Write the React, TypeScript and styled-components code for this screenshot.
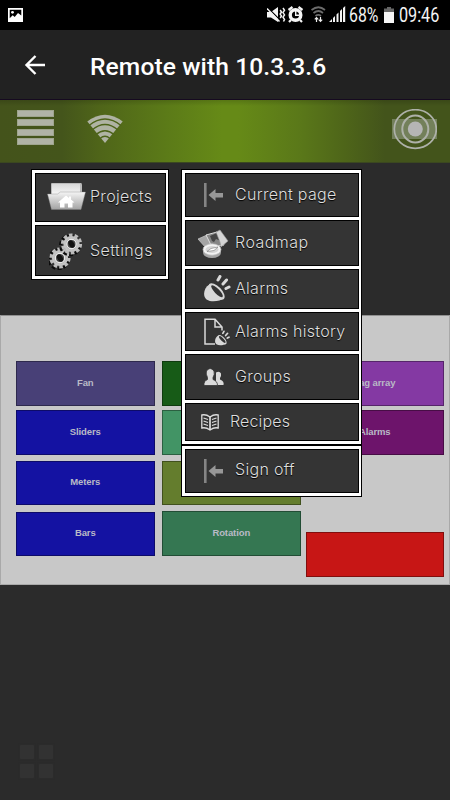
import React from 'react';
import styled, { createGlobalStyle } from 'styled-components';

const GlobalStyle = createGlobalStyle`
  * { box-sizing: border-box; }
  body { margin: 0; background: #2b2b2b; }
`;

const Screen = styled.div`
  position: relative;
  width: 450px;
  height: 800px;
  overflow: hidden;
  display: flex;
  flex-direction: column;
  background: #2b2b2b;
  font-family: Roboto, sans-serif;
`;

const StatusBar = styled.header`
  flex: none;
  height: 30px;
  background: #000;
  display: flex;
  align-items: center;
  justify-content: space-between;
  padding: 0 10px 0 8px;
  color: #f4f4f4;
`;

const StatusIcons = styled.div`
  display: flex;
  align-items: center;
`;

const StatusText = styled.span<{ $w: number; $scale: number }>`
  display: block;
  width: ${p => p.$w}px;
  font-size: 19.5px;
  line-height: 30px;
  white-space: nowrap;
  transform: translateY(1px) scaleX(${p => p.$scale});
  transform-origin: left center;
`;

const AppBar = styled.div`
  flex: none;
  height: 70px;
  background: #222;
  border-bottom: 1px solid #160a20;
  display: flex;
  align-items: center;
  padding: 0 0 3px 24px;
`;

const Title = styled.h1`
  margin: 0 0 0 44px;
  color: #fff;
  font: 500 24.6px/30px Roboto, sans-serif;
  letter-spacing: 0.1px;
  padding-top: 7px;
`;

const BackIcon = styled.svg`
  margin-top: 3px;
`;

const GreenBar = styled.nav`
  flex: none;
  height: 63px;
  display: flex;
  align-items: flex-start;
  background:
    linear-gradient(180deg, rgba(0, 0, 0, 0.14), rgba(0, 0, 0, 0) 6px),
    linear-gradient(90deg, #44531b 0, #44551b 62px, #4f6519 100px, #5b7a18 165px, #668a17 222px, #668a17 238px, #5a7819 300px, #4e6519 345px, #43541b 385px, #43541b 100%);
  border-bottom: 1px solid #3b4820;
  padding: 9px 13px 0 17px;
`;

const Burger = styled.div`
  display: grid;
  grid-template-rows: repeat(4, 7px);
  row-gap: 2.4px;
  width: 37px;
  padding-top: 1px;
`;

const BurgerLine = styled.span`
  background: #b0b3a6;
  border: 1px solid #9fa58e;
`;

const WifiIcon = styled.svg`
  margin: 5px 0 0 33px;
`;

const TargetIcon = styled.svg`
  margin-left: auto;
`;

const Canvas = styled.main`
  flex: none;
  margin-top: 152px;
  height: 270px;
  display: grid;
  grid-template-columns: 138px 139px 139px;
  column-gap: 8px;
  justify-content: start;
  padding: 45px 0 0 15px;
  background: #c8c8c8;
  border: 1px solid #a9a9a9;
  border-top-color: #909090;
`;

const Column = styled.div<{ $shift?: number }>`
  display: flex;
  flex-direction: column;
  width: 138.5px;
  margin-left: ${p => p.$shift ?? 0}px;
`;

const PageButton = styled.button<{ $color: string; $gap?: number; $h?: number }>`
  height: ${p => p.$h ?? 45}px;
  margin: ${p => p.$gap ?? 0}px 0 0;
  padding: 0 0 2px;
  border: 1px solid rgba(0, 0, 0, 0.35);
  background: ${p => p.$color};
  color: #b9bac6;
  font: 700 9.5px/12px 'Liberation Sans', sans-serif;
`;

const Caption = styled.span`
  display: inline-block;
  letter-spacing: -0.1px;
`;

const Menu = styled.div<{ $x: number; $w: number; $rows: string }>`
  position: absolute;
  left: ${p => p.$x}px;
  top: 170px;
  width: ${p => p.$w}px;
  display: grid;
  grid-template-rows: ${p => p.$rows};
  row-gap: 3px;
  padding: 3px 2px 3px 3px;
  background: #fff;
  box-shadow: 0 0 0 1px #000;
`;

const SignOffMenu = styled(Menu)`
  top: 446px;
  box-shadow: 0 0 0 1px #000, 0 -2px 0 #000;
`;

const MenuItem = styled.a<{ $label: number; $shift?: number; $ls?: number }>`
  display: grid;
  grid-template-columns: ${p => p.$label}px 1fr;
  align-items: center;
  background: #343434;
  border: 1px solid #000;
  color: #dedede;
  font: 300 16px/20px Inter, sans-serif;
  letter-spacing: ${p => p.$ls ?? 0.3}px;
  text-shadow: 0 1px 1px #000;
  white-space: nowrap;

  > span {
    transform: translateY(${p => p.$shift ?? -1}px);
  }
`;

const ItemIcon = styled.svg<{ $x: number; $y?: number }>`
  display: block;
  margin-left: ${p => p.$x}px;
  transform: translateY(${p => p.$y ?? 0}px);
`;

const Launcher = styled.div`
  display: grid;
  grid-template-columns: 14px 14px;
  grid-auto-rows: 14px;
  gap: 5px;
  margin: 160px 0 0 20px;
`;

const Tile = styled.span`
  background: #323232;
  border-radius: 1px;
  box-shadow: 0 0 2px #303030;
`;

const ExitArrow = () => (
  <ItemIcon $x={18} width="20" height="24" viewBox="0 0 20 24">
    <path d="M0 0h2.600v24H0z" fill="#858585" />
    <path d="M4.500 12l7-6v4h7.500v4.500h-7.500V18z" fill="#979797" />
  </ItemIcon>
);

const FolderIcon = () => (
  <ItemIcon $x={11} $y={-1} width="40" height="30" viewBox="0 0 40 30">
    <defs>
      <linearGradient id="folder" x1="0" y1="0" x2="0" y2="1">
        <stop offset="0" stopColor="#f5f5f5" />
        <stop offset="1" stopColor="#a2a2a2" />
      </linearGradient>
      <linearGradient id="folderBack" x1="0" y1="0" x2="0" y2="1">
        <stop offset="0" stopColor="#d8d8d8" />
        <stop offset="1" stopColor="#f6f6f6" />
      </linearGradient>
    </defs>
    <path d="M5 1h29q1 0 1 2v10H4V2q0-1 1-1z" fill="#bbb" />
    <path d="M5 2h28v10H5z" fill="url(#folderBack)" />
    <path d="M.5 12h10l3-2h25l-4.500 17.500H4.500z" fill="url(#folder)" stroke="#888" strokeWidth=".4" />
    <path d="M19 13.500l-8 7h2v5h4.500v-4h3.500v4h4.500v-5h2l-3.500-3V14.500h-2v1.500z" fill="#fff" />
  </ItemIcon>
);

const Gear = ({ x, y }: { x: number; y: number }) => (
  <g transform={`translate(${x} ${y})`}>
    <circle r="9.500" cx="-1.500" cy="1.200" fill="none" stroke="#0c0c0c" strokeWidth="3" strokeDasharray="3.800 2.170" />
    <circle r="9" fill="none" stroke="#bcbcbc" strokeWidth="3.200" strokeDasharray="3.500 2.155" />
    <circle r="6.800" fill="#929292" stroke="#c4c4c4" strokeWidth="2.600" />
    <circle r="4.700" fill="#444" stroke="#e8e8e8" strokeWidth="1.400" />
    <ellipse rx="2.600" ry="4" transform="rotate(-30)" fill="#111" />
  </g>
);

const GearsIcon = () => (
  <ItemIcon $x={13} width="36" height="38" viewBox="0 0 36 38">
    <Gear x={11} y={26} />
    <Gear x={22.5} y={12} />
  </ItemIcon>
);

const RoadmapIcon = () => (
  <ItemIcon $x={12} $y={1} width="32" height="30" viewBox="0 0 32 30">
    <path d="M0 10l9-4 4 11-5 2z" fill="#a5a5a5" stroke="#ccc" strokeWidth=".7" />
    <path d="M8 6l11-3 7 13-12 2z" fill="#858585" stroke="#ddd" strokeWidth="1" />
    <path d="M12 7l7-3 4 8-5-2-2 3-2-1z" fill="#444" />
    <path d="M18 3l4-2 8 11-7 6-1-5z" fill="#d4d4d4" stroke="#999" strokeWidth=".6" />
    <ellipse cx="14" cy="23.500" rx="9" ry="5.500" fill="#a5a5a5" />
    <ellipse cx="14" cy="20.500" rx="9" ry="5.700" fill="#f3f3f3" stroke="#bbb" strokeWidth=".7" />
    <ellipse cx="14" cy="20.500" rx="6.500" ry="3.600" fill="#d6d6d6" />
    <path d="M9 22.500l4-3 7-1.500-4 3.500z" fill="#fff" stroke="#777" strokeWidth=".6" />
  </ItemIcon>
);

const bell = (
  <g>
    <path d="M5.500 9.500C-.5 13-1.500 21 2.500 24.500c5.500 3.500 13.500 1.500 18-1.500z" fill="#d9d9d9" />
    <ellipse cx="12.600" cy="16.500" rx="10.500" ry="5" transform="rotate(46 12.600 16.500)" fill="#d9d9d9" />
    <ellipse cx="13" cy="16.200" rx="8" ry="2.500" transform="rotate(46 13 16.200)" fill="#343434" />
    <path d="M14 5l2-3.500M19 9l3.500-4M22 13.500l3-1.500" stroke="#d9d9d9" strokeWidth="3" strokeLinecap="round" />
  </g>
);

const AlarmIcon = () => (
  <ItemIcon $x={18} width="28" height="28" viewBox="0 0 28 28">{bell}</ItemIcon>
);

const HistoryIcon = () => (
  <ItemIcon $x={18} width="28" height="28" viewBox="0 0 28 28">
    <path d="M11 26H1V1.200h10L18 9v3.500M11 1v8h7" fill="none" stroke="#d9d9d9" strokeWidth="1.500" />
    <g transform="translate(11 12.500) scale(.56)">{bell}</g>
  </ItemIcon>
);

const GroupsIcon = () => (
  <ItemIcon $x={18} width="21" height="18" viewBox="0 0 21 18">
    <path d="M12 17h7.500q1-4-3.500-5.500V10q1.500-2 1-4.500Q15.500 2.500 12 4.500z" fill="#d9d9d9" />
    <path d="M0 17.500q-.5-4.500 3.500-6V9.500Q1.500 6 2.500 3q3.500-5 7.500 0 1 3.500-1 6.500v2q4.500 1.500 4.500 6z" fill="#d9d9d9" stroke="#343434" strokeWidth=".8" />
  </ItemIcon>
);

const RecipesIcon = () => (
  <ItemIcon $x={15} width="18" height="17" viewBox="0 0 18 17" fill="none" stroke="#ddd">
    <path d="M9 3Q5 0 .8 1v13Q5 13 9 16q4-3 8.200-2V1Q13 0 9 3z" strokeWidth="1.300" />
    <path d="M9 3v13" strokeWidth="1.700" />
    <path d="M2.500 4L7 5.500M2.500 7L7 8.500M2.500 10L7 11.500M15.500 4L11 5.500M15.500 7L11 8.500M15.500 10L11 11.500" strokeWidth="1.200" />
  </ItemIcon>
);

const PictureIcon = () => (
  <svg width="15" height="14" viewBox="0 0 15 14">
    <path fill="#fff" fillRule="evenodd" d="M0 0h15v14H0zM1.700 1.700v8.600l3-3 2 1.700L10 5l3.300 2.500V1.700z" />
    <circle cx="4.500" cy="4.300" r="1.400" fill="#fff" />
  </svg>
);

/* Mute, alarm clock, wifi, signal bars */
const DeviceIcons = () => (
  <svg width="82" height="18" viewBox="0 0 82 18">
    <g fill="#f4f4f4">
      <path d="M0 6h4l7-5v15l-7-4.500H0z" />
      <path d="M13.200 4l1.300 2-1.300 2 1.300 2-1.300 2M16 2l1.500 2.300L16 6.600l1.500 2.300L16 11.200l1.500 2.300-1 2" fill="none" stroke="#f4f4f4" strokeWidth="1.500" />
      <path d="M1.500 2.500l12 12" stroke="#000" strokeWidth="1.300" />
      <path d="M0 2.500l12.500 13" stroke="#f4f4f4" strokeWidth="1.500" />
      <circle cx="28.500" cy="9" r="7" />
      <path d="M21.500 4l4-3M35.500 4l-4-3M24 14l-2 2M33 14l2 2" stroke="#f4f4f4" strokeWidth="2.200" />
      <circle cx="28.500" cy="9" r="3.600" fill="#000" />
      <path d="M28.700 5v4.200h3.500" fill="none" stroke="#f4f4f4" strokeWidth="1.400" />
      <path d="M62 16l3-3v3zM66 16v-4l2-2v6zM69.500 16V8.500l2-2V16zM73 16V5l2-2v13zM76 16V2l2.200-2v16z" />
    </g>
    <g fill="none" stroke="#6c6c6c" strokeWidth="1.700">
      <path d="M44.500 4q7-5.500 13.500 0M46.500 7q5-4 9.500 0M48.500 10q2.700-2.300 5.500 0" />
    </g>
    <path d="M49.500 16v-4M47.800 13.300l1.700-1.800 1.700 1.800M53.500 11v4M51.800 13.700l1.700 1.800 1.700-1.800" stroke="#eee" strokeWidth="1.200" fill="none" />
  </svg>
);

const BatteryIcon = () => (
  <svg width="15" height="16" viewBox="0 0 15 16">
    <path d="M3 0h4v1.500h3V5H0V1.500h3z" fill="#666" />
    <path d="M0 5h10v11H0z" fill="#f6f6f6" />
  </svg>
);

export default function App() {
  return (
    <>
      <GlobalStyle />
      <Screen>
        <StatusBar>
          <PictureIcon />
          <StatusIcons>
            <DeviceIcons />
            <StatusText $w={35} $scale={0.81}>68%</StatusText>
            <BatteryIcon />
            <StatusText $w={41} $scale={0.83}>09:46</StatusText>
          </StatusIcons>
        </StatusBar>

        <AppBar>
          <BackIcon width="22" height="22" viewBox="0 0 22 22" fill="none" stroke="#fff" strokeWidth="2.400">
            <path d="M21 11H3M11.500 2L2.500 11l9 9" />
          </BackIcon>
          <Title>Remote with 10.3.3.6</Title>
        </AppBar>

        <GreenBar>
          <Burger>
            <BurgerLine /><BurgerLine /><BurgerLine /><BurgerLine />
          </Burger>
          <WifiIcon width="36" height="30" viewBox="0 0 36 30">
            <path d="M.3 7.500Q18-6 35.700 7.500L18 29z" fill="#afb3a3" />
            <g fill="none" stroke="#4d631a" strokeWidth="1.300">
              <path d="M2 11.500Q18-1.500 34 11.500M5 16Q18 5 31 16M9 20.500q9-7.500 18 0M13 24.500q5-4.500 10 0" />
            </g>
          </WifiIcon>
          <TargetIcon width="46" height="42" viewBox="0 0 46 42">
            <path d="M1 10h45v20H1z" fill="#73805a" />
            <g fill="none" stroke="#aeb1a9">
              <ellipse cx="24.300" cy="20" rx="21" ry="19.300" strokeWidth="1.700" />
              <ellipse cx="24.300" cy="20" rx="13" ry="13.500" strokeWidth="2" />
            </g>
            <circle cx="24.300" cy="20" r="7.500" fill="#b5b5b5" />
          </TargetIcon>
        </GreenBar>

        <Canvas>
          <Column>
            <PageButton $color="#484077"><Caption>Fan</Caption></PageButton>
            <PageButton $color="#1412a2" $gap={4}><Caption>Sliders</Caption></PageButton>
            <PageButton $color="#1412a2" $gap={6} $h={44}><Caption>Meters</Caption></PageButton>
            <PageButton $color="#1412a2" $gap={7} $h={44}><Caption>Bars</Caption></PageButton>
          </Column>
          <Column>
            <PageButton $color="#175b17" />
            <PageButton $color="#429465" $gap={4} />
            <PageButton $color="#647d2d" $gap={6} $h={44} />
            <PageButton $color="#357752" $gap={6}><Caption>Rotation</Caption></PageButton>
          </Column>
          <Column $shift={-3.5}>
            <PageButton $color="#8439a3"><Caption>Tag array</Caption></PageButton>
            <PageButton $color="#6d146b" $gap={4}><Caption>Alarms</Caption></PageButton>
            <PageButton $color="#c71615" $gap={77} />
          </Column>
        </Canvas>

        <Launcher><Tile /><Tile /><Tile /><Tile /></Launcher>

        <Menu $x={32} $w={135.5} $rows="49px 51px">
          <MenuItem $label={54} $shift={-2}><FolderIcon /><span>Projects</span></MenuItem>
          <MenuItem $label={54} $ls={0.4}><GearsIcon /><span>Settings</span></MenuItem>
        </Menu>

        <Menu $x={182} $w={179} $rows="44px 46px 40px 39px 46px 38px">
          <MenuItem $label={49}><ExitArrow /><span>Current page</span></MenuItem>
          <MenuItem $label={49} $ls={0.45}><RoadmapIcon /><span>Roadmap</span></MenuItem>
          <MenuItem $label={49}><AlarmIcon /><span>Alarms</span></MenuItem>
          <MenuItem $label={49}><HistoryIcon /><span>Alarms history</span></MenuItem>
          <MenuItem $label={49}><GroupsIcon /><span>Groups</span></MenuItem>
          <MenuItem $label={44} $ls={0.15}><RecipesIcon /><span>Recipes</span></MenuItem>
        </Menu>

        <SignOffMenu $x={182} $w={179} $rows="44px">
          <MenuItem $label={49} $shift={-2}><ExitArrow /><span>Sign off</span></MenuItem>
        </SignOffMenu>
      </Screen>
    </>
  );
}
